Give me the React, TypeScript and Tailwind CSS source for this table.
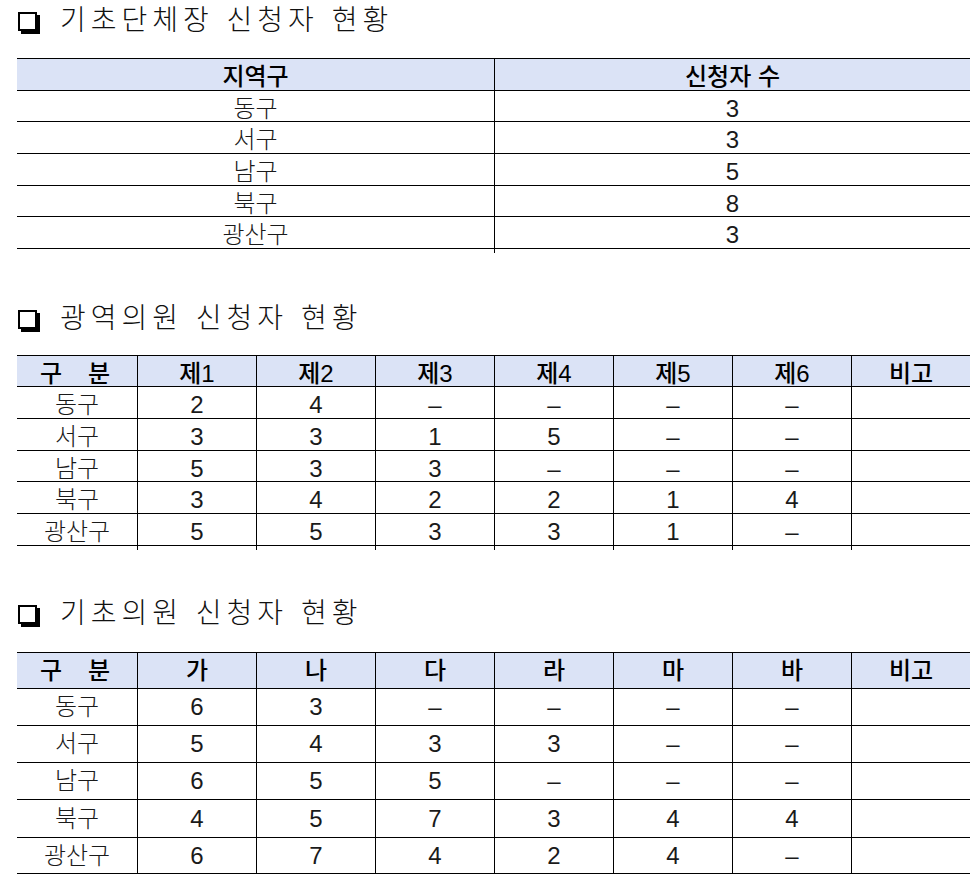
import React from 'react';

const FONT = `font-['Liberation_Sans','Noto_Sans_CJK_KR',sans-serif]`;

type Row = { h: string; cells: string[] };

const SectionTitle = ({ text, className }: { text: string; className: string }) => (
  <div className={`flex items-center h-[32px] ${className}`}>
    <span className="ml-[1px] w-[19px] h-[19px] border-2 border-black bg-white shadow-[3px_3px_0_#000] shrink-0" />
    <span className="ml-[23px] text-[28px] leading-[32px] tracking-[5px] font-light text-[#111]">{text}</span>
  </div>
);

const Grid = ({
  cols,
  header,
  headerH,
  rows,
  className,
}: {
  cols: string;
  header: React.ReactNode[];
  headerH: string;
  rows: Row[];
  className: string;
}) => (
  <div className={`border-t border-black ${className}`}>
    <div className={`grid ${cols} ${headerH} border-b border-black bg-[#dbe3f6]`}>
      {header.map((c, i) => (
        <div
          key={i}
          className={`flex items-center justify-center text-[24px] font-medium text-black ${i > 0 ? 'border-l border-black' : ''}`}
        >
          {c}
        </div>
      ))}
    </div>
    {rows.map((r, ri) => (
      <div key={ri} className={`grid ${cols} ${r.h} border-b border-black`}>
        {r.cells.map((c, i) => (
          <div
            key={i}
            className={`flex items-center justify-center text-[24px] font-light text-[#1a1a1a] ${i > 0 ? 'border-l border-black' : ''}`}
          >
            {c}
          </div>
        ))}
      </div>
    ))}
  </div>
);

const gubun = (
  <span className="flex gap-[26px] -ml-[4px]">
    <span>구</span>
    <span>분</span>
  </span>
);

export default function App() {
  const t1: Row[] = [
    { h: 'h-[31px]', cells: ['동구', '3'] },
    { h: 'h-[32px]', cells: ['서구', '3'] },
    { h: 'h-[32px]', cells: ['남구', '5'] },
    { h: 'h-[31px]', cells: ['북구', '8'] },
    { h: 'h-[32px]', cells: ['광산구', '3'] },
  ];

  const t2: Row[] = [
    { h: 'h-[32px]', cells: ['동구', '2', '4', '–', '–', '–', '–', ''] },
    { h: 'h-[32px]', cells: ['서구', '3', '3', '1', '5', '–', '–', ''] },
    { h: 'h-[31px]', cells: ['남구', '5', '3', '3', '–', '–', '–', ''] },
    { h: 'h-[32px]', cells: ['북구', '3', '4', '2', '2', '1', '4', ''] },
    { h: 'h-[32px]', cells: ['광산구', '5', '5', '3', '3', '1', '–', ''] },
  ];

  const t3: Row[] = [
    { h: 'h-[37px]', cells: ['동구', '6', '3', '–', '–', '–', '–', ''] },
    { h: 'h-[37px]', cells: ['서구', '5', '4', '3', '3', '–', '–', ''] },
    { h: 'h-[37px]', cells: ['남구', '6', '5', '5', '–', '–', '–', ''] },
    { h: 'h-[38px]', cells: ['북구', '4', '5', '7', '3', '4', '4', ''] },
    { h: 'h-[36px]', cells: ['광산구', '6', '7', '4', '2', '4', '–', ''] },
  ];

  const cols8 = 'grid-cols-[120px_repeat(7,119px)]';

  return (
    <div className={`${FONT} bg-white w-[979px] h-[891px] pl-[17px] pt-[5px]`}>
      <div className="w-[953px]">
        <SectionTitle text="기초단체장 신청자 현황" className="" />
        <Grid
          className="mt-[21px]"
          cols="grid-cols-[477px_476px]"
          headerH="h-[32px]"
          header={['지역구', '신청자 수']}
          rows={t1}
        />

        <SectionTitle text="광역의원 신청자 현황" className="mt-[54px]" />
        <Grid
          className="mt-[20px]"
          cols={cols8}
          headerH="h-[31px]"
          header={[gubun, '제1', '제2', '제3', '제4', '제5', '제6', '비고']}
          rows={t2}
        />

        <SectionTitle text="기초의원 신청자 현황" className="mt-[52px]" />
        <Grid
          className="mt-[22px]"
          cols={cols8}
          headerH="h-[36px]"
          header={[gubun, '가', '나', '다', '라', '마', '바', '비고']}
          rows={t3}
        />
      </div>
    </div>
  );
}
